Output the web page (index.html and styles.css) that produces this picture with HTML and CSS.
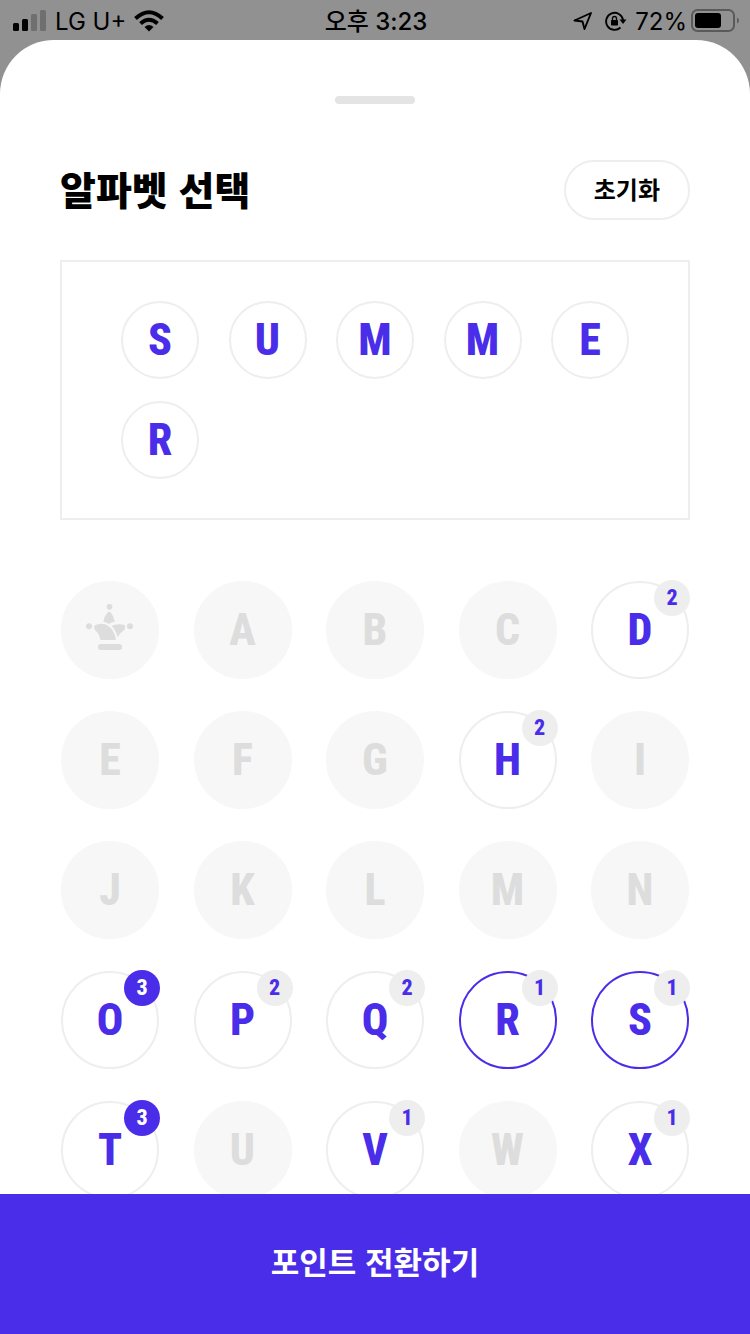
FILE: index.html
```html
<!DOCTYPE html>
<html lang="ko">
<head>
  <meta charset="UTF-8" />
  <meta name="viewport" content="width=device-width, initial-scale=1.0" />
  <title>알파벳 선택</title>
  <link rel="stylesheet" href="styles.css">
</head>
<body>
  <header class="status-bar">
    <div class="status-left">
      <svg class="icon-signal" width="34" height="22" viewBox="0 0 34 22">
        <rect x="0" y="13" width="6" height="8" rx="1.5" />
        <rect x="9" y="9" width="6" height="12" rx="1.5" />
        <rect class="dim" x="18" y="4" width="6" height="17" rx="1.5" />
        <rect class="dim" x="27" y="0" width="6" height="21" rx="1.5" />
      </svg>
      <span>LG U+</span>
      <svg class="icon-wifi" width="30" height="22" viewBox="0 0 30 22">
        <path d="M1.500 8.500Q15-4 28.500 8.500" fill="none" stroke="#000" stroke-width="4" />
        <path d="M6.500 13.500Q15 6 23.500 13.500" fill="none" stroke="#000" stroke-width="4" />
        <path d="M10.500 17Q15 13 19.500 17L15 21.500z" />
      </svg>
    </div>
    <span class="status-time">오후 3:23</span>
    <div class="status-right">
      <svg class="icon-location" width="20" height="20" viewBox="0 0 20 20">
        <path d="M1.500 9.500L18 2L11.500 18L9.500 10.500z" fill="none" stroke="#000" stroke-width="1.900" stroke-linejoin="round" />
      </svg>
      <svg class="icon-lock" width="22" height="20" viewBox="0 0 22 20">
        <path d="M15.500 16.500A8.500 8.500 0 1 1 18 9" fill="none" stroke="#000" stroke-width="1.900" />
        <path d="M14.500 8.500h7l-3.500 4.500z" />
        <rect x="6" y="9" width="7" height="5.500" rx="0.800" />
        <path d="M7.500 9.500V7.500a2 2 0 0 1 4 0v2" fill="none" stroke="#000" stroke-width="1.300" />
      </svg>
      <span>72%</span>
      <svg class="icon-battery" width="48" height="24" viewBox="0 0 48 24">
        <rect x="1" y="1" width="42" height="21" rx="5.500" fill="none" stroke="#5a5a5a" stroke-width="2" />
        <rect x="4" y="4" width="26" height="15" rx="3" />
        <path d="M46 8.500q2 1 2 3t-2 3z" fill="#5a5a5a" />
      </svg>
    </div>
  </header>

  <main class="sheet">
    <div class="handle"></div>

    <div class="sheet-header">
      <h1>알파벳 선택</h1>
      <button class="reset-btn">초기화</button>
    </div>

    <div class="selected">
      <button class="chip">S</button>
      <button class="chip">U</button>
      <button class="chip">M</button>
      <button class="chip">M</button>
      <button class="chip">E</button>
      <button class="chip">R</button>
    </div>

    <div class="letters">
      <button class="letter" aria-label="조커" disabled>
        <svg class="icon-crown" width="56" height="56" viewBox="96 96 168 168">
          <circle cx="178.500" cy="110.500" r="8.500" />
          <circle cx="117" cy="169" r="9" />
          <circle cx="240" cy="169" r="9" />
          <path d="M172 128Q177 122 183 128Q191 138 194 155Q184 156 177 162Q169 156 160 155Q163 138 172 128z" />
          <path d="M134 166Q158 156 175 168Q194 182 198 210H151Q149 191 134 179Q130 172 134 166z" />
          <path d="M185 167Q203 159 224 165Q227 173 224 179Q210 187 203 202Q198 181 185 167z" />
          <rect x="144" y="222" width="72" height="18" rx="8" />
        </svg>
      </button>
      <button class="letter" disabled>A</button>
      <button class="letter" disabled>B</button>
      <button class="letter" disabled>C</button>
      <button class="letter">D<span class="count">2</span></button>

      <button class="letter" disabled>E</button>
      <button class="letter" disabled>F</button>
      <button class="letter" disabled>G</button>
      <button class="letter">H<span class="count">2</span></button>
      <button class="letter" disabled>I</button>

      <button class="letter" disabled>J</button>
      <button class="letter" disabled>K</button>
      <button class="letter" disabled>L</button>
      <button class="letter" disabled>M</button>
      <button class="letter" disabled>N</button>

      <button class="letter">O<span class="count full">3</span></button>
      <button class="letter">P<span class="count">2</span></button>
      <button class="letter">Q<span class="count">2</span></button>
      <button class="letter active">R<span class="count">1</span></button>
      <button class="letter active">S<span class="count">1</span></button>

      <button class="letter">T<span class="count full">3</span></button>
      <button class="letter" disabled>U</button>
      <button class="letter">V<span class="count">1</span></button>
      <button class="letter" disabled>W</button>
      <button class="letter">X<span class="count">1</span></button>
    </div>
  </main>

  <button class="submit-btn">포인트 전환하기</button>
</body>
</html>
```

FILE: styles.css
```css
* {
  box-sizing: border-box;
}
body {
  margin: 0;
  height: 100vh;
  display: flex;
  flex-direction: column;
  overflow: hidden;
  background: #919191;
  color: #000;
  font-family: "Noto Sans CJK KR", sans-serif;
}
button {
  margin: 0;
  padding: 0;
  font-family: inherit;
  cursor: pointer;
}

/* status bar */
.status-bar {
  flex: none;
  display: grid;
  grid-template-columns: 1fr auto 1fr;
  align-items: center;
  height: 40px;
  padding: 0 11px 0 13px;
  font-family: Inter, "Noto Sans CJK KR", sans-serif;
  font-size: 24px;
  line-height: 40px;
}
.status-bar span {
  padding-top: 2px;
}
.status-left, .status-right {
  display: flex;
  align-items: center;
  gap: 8px;
}
.status-right {
  justify-content: flex-end;
}
.status-time {
  font-weight: 500;
}
.icon-signal .dim {
  fill: #6f6f6f;
}
.icon-location {
  margin-right: 4px;
}
.icon-battery {
  margin-left: -4px;
}

/* bottom sheet */
.sheet {
  flex: 1;
  min-height: 0;
  overflow: hidden;
  padding: 56px 60px 0;
  background: #fff;
  border-radius: 54px 54px 0 0;
}
.handle {
  width: 80px;
  height: 8px;
  margin: 0 auto;
  border-radius: 4px;
  background: #e4e4e4;
}
.sheet-header {
  display: flex;
  justify-content: space-between;
  align-items: center;
  margin: 56px 0 40px;
}
h1 {
  margin: 0;
  padding-bottom: 4px;
  font-size: 39px;
  line-height: 56px;
  font-weight: 900;
}
.reset-btn {
  height: 60px;
  padding: 0 28px 4px;
  border: 2px solid #eee;
  border-radius: 30px;
  background: #fff;
  color: #000;
  font-size: 24px;
  font-weight: 700;
}
.selected {
  display: grid;
  grid-template-columns: repeat(5, 78px);
  justify-content: space-between;
  gap: 22px 0;
  padding: 39px 59px;
  border: 2px solid #eee;
}
.chip, .letter {
  border: 2px solid #eee;
  border-radius: 50%;
  background: #fff;
  color: #4a2de9;
  font-family: "Roboto Condensed", "Open Sans Condensed", Roboto, sans-serif;
  font-size: 44px;
  font-weight: 800;
  line-height: 1;
}
.chip {
  height: 78px;
}
.letters {
  display: grid;
  grid-template-columns: repeat(5, 98px);
  justify-content: space-between;
  gap: 32px 0;
  padding: 0 1px;
  margin-top: 61px;
}
.letter {
  position: relative;
  height: 98px;
}
.letter:disabled {
  border-color: #f7f7f7;
  background: #f7f7f7;
  color: #ddd;
  cursor: default;
}
.letter.active {
  border-color: #4a2de9;
}
.count {
  position: absolute;
  top: -3px;
  right: -3px;
  width: 36px;
  height: 36px;
  border-radius: 50%;
  background: #eee;
  font-size: 22px;
  line-height: 36px;
  text-align: center;
}
.count.full {
  background: #4a2de9;
  color: #fff;
}
.icon-crown {
  display: block;
  margin: 0 auto;
  fill: #ddd;
}

/* bottom action */
.submit-btn {
  flex: none;
  height: 140px;
  padding-bottom: 8px;
  border: none;
  background: #4a2de9;
  color: #fff;
  font-size: 31px;
  font-weight: 700;
}
```
